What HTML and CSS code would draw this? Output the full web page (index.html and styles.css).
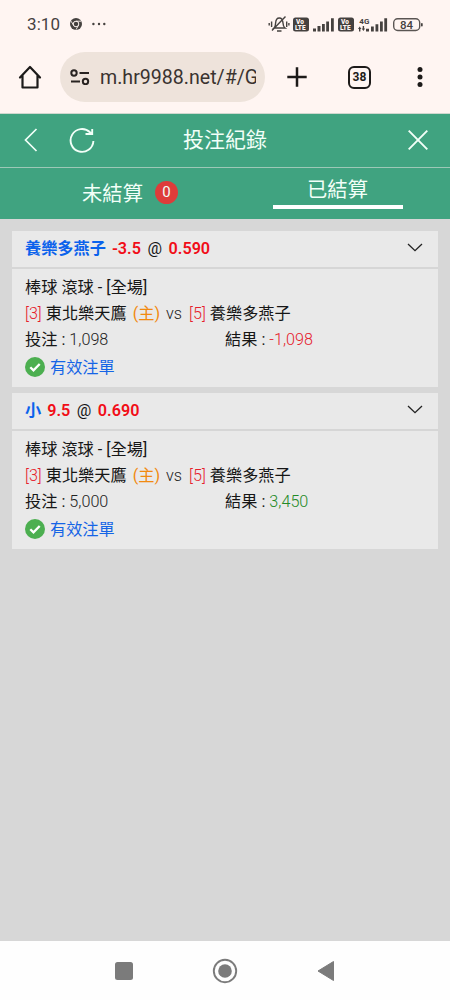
FILE: index.html
```html
<!DOCTYPE html>
<html lang="zh-Hant">
<head>
<meta charset="utf-8">
<meta name="viewport" content="width=device-width, initial-scale=1">
<title>投注紀錄</title>
<link rel="stylesheet" href="styles.css">
</head>
<body>
<div class="screen">
  <div class="status">
    <span class="clock">3:10</span>
    <svg class="chrome" width="12" height="12" viewBox="0 0 12 12"><circle cx="6" cy="6" r="6" fill="#45413f"/><circle cx="6" cy="6" r="2.8" fill="#45413f" stroke="#fff5f2" stroke-width="1"/><path d="M6 3.2h5M3.6 7.4 1.1 3.2M8.4 7.4 6 11.7" stroke="#fff5f2" stroke-width=".9"/></svg>
    <svg class="more" width="14" height="4" viewBox="0 0 14 4" fill="#45413f"><circle cx="1.4" cy="2" r="1.2"/><circle cx="7" cy="2" r="1.2"/><circle cx="12.3" cy="2" r="1.2"/></svg>
    <svg class="signals" width="156" height="20" viewBox="0 0 156 20">
      <g fill="none" stroke="#45413f" stroke-width="1.4">
        <path d="M6 14c1.500-1.200 1.500-3 1.600-5 .2-3 1.700-5 3.700-5s3.500 2 3.700 5c.1 2 .2 3.800 2 5zM9 17h4.500M4 16.500 17.500 2.500M3.600 7.500V13M1.200 9v2.500M18.700 7.500V13M20.900 9v2.500"/>
      </g>
      <g fill="#45413f">
        <rect x="25" y="3.500" width="16" height="14" rx="2.500"/>
        <rect x="70" y="3.500" width="16" height="14" rx="2.500"/>
        <path d="M45 14.500h3v3h-3zM49.500 12h3v5.500h-3zM54 10h2.800v7.500H54zM58.200 7.500H61v10h-2.800zM63 4.300h2.800v13.200H63z"/>
        <path d="M98 14.800h3v2.700h-3zM103 12.500h2.800v5H103zM107.500 10.200h2.800v7.300h-2.800zM112 7.500h2.800v10H112zM116.300 4.300h2.800v13.200h-2.800z"/>
        <path d="m90 15 1.700-2.500L93.400 15h-1v2.500h-1.400V15zM93.700 14.500h1V12h1.400v2.500h1l-1.700 2.500z"/>
      </g>
      <g fill="#fff5f2" class="lte"><text x="28" y="10">Vo</text><text x="27" y="16.300">LTE</text><text x="73" y="10">Vo</text><text x="72" y="16.300">LTE</text></g>
      <text class="net" x="91.300" y="9.500">4G</text>
      <rect x="125.700" y="4.700" width="26" height="11.800" rx="4" fill="none" stroke="#5a5553" stroke-width="1.400"/>
      <rect x="153" y="9" width="1.700" height="3.600" rx=".8" fill="#45413f"/>
      <text class="battery" x="138.500" y="14.500">84</text>
    </svg>
  </div>
  <div class="browser">
    <svg class="home" width="24" height="24" viewBox="0 0 24 24" fill="none" stroke="#1d1a19" stroke-width="2.200" stroke-linejoin="round" stroke-linecap="round"><path d="M2 12.500 12 2l10 10.500M4.500 10.500V22.500h15v-12"/></svg>
    <div class="address">
      <svg width="20" height="16" viewBox="0 0 20 16" fill="none" stroke="#282321" stroke-width="2"><circle cx="4" cy="4" r="2.700"/><path d="M9.500 4H19M1 12.500h9"/><circle cx="15.500" cy="12.500" r="2.700"/></svg>
      <span class="url">m.hr9988.net/#/G</span>
    </div>
    <svg class="plus" width="20" height="20" viewBox="0 0 20 20"><path d="M10 .3v19.400M.3 10h19.400" stroke="#1d1a19" stroke-width="2.500"/></svg>
    <span class="count">38</span>
    <svg class="dots" width="6" height="20" viewBox="0 0 6 20" fill="#1d1a19"><circle cx="3" cy="2.600" r="2.500"/><circle cx="3" cy="10" r="2.500"/><circle cx="3" cy="17.400" r="2.500"/></svg>
  </div>
  <header class="header">
    <svg class="back" width="14" height="24" viewBox="0 0 14 24" fill="none" stroke="#f2fff8" stroke-width="1.700"><path d="M12.500 1 1.500 12l11 11"/></svg>
    <svg class="reload" width="26" height="26" viewBox="0 0 26 26" fill="none" stroke="#f2fff8" stroke-width="1.900"><path d="M24.400 14A11.400 11.400 0 1 1 21 5.300l1.500 1.300M16.500 7h6.700V2"/></svg>
    <h1 class="title">投注紀錄</h1>
    <svg class="close" width="20" height="20" viewBox="0 0 20 20"><path d="m.7.700 18.600 18.600M19.300.700.700 19.300" stroke="#f2fff8" stroke-width="1.900"/></svg>
  </header>
  <nav class="tabs">
    <div class="tab">未結算<span class="badge">0</span></div>
    <div class="tab"><span class="active">已結算</span></div>
  </nav>
  <main class="list">
    <section class="card">
      <div class="head"><span class="pick">養樂多燕子</span><span class="num">-3.5</span><span class="at">@</span><span class="num">0.590</span>
        <svg class="chevron" width="16" height="9" viewBox="0 0 16 9" fill="none" stroke="#222" stroke-width="1.300"><path d="m1 1 7 6.700L15 1"/></svg></div>
      <div class="body">
        <div class="line">棒球 滾球 - [全場]</div>
        <div class="line"><span class="loss">[3]</span><span class="team">東北樂天鷹</span><span class="host">(主)</span><span class="vs">vs</span><span class="loss">[5]</span><span class="team">養樂多燕子</span></div>
        <div class="line split"><span>投注 : <span class="val">1,098</span></span><span>結果 : <span class="loss">-1,098</span></span></div>
        <div class="valid"><svg width="20" height="20" viewBox="0 0 20 20"><circle cx="10" cy="10" r="10" fill="#4caf50"/><path d="m5.300 10.200 3.200 3.200L14.700 7" fill="none" stroke="#fff" stroke-width="2.300"/></svg><span class="note">有效注單</span></div>
      </div>
    </section>
    <section class="card">
      <div class="head"><span class="pick">小</span><span class="num">9.5</span><span class="at">@</span><span class="num">0.690</span>
        <svg class="chevron" width="16" height="9" viewBox="0 0 16 9" fill="none" stroke="#222" stroke-width="1.300"><path d="m1 1 7 6.700L15 1"/></svg></div>
      <div class="body">
        <div class="line">棒球 滾球 - [全場]</div>
        <div class="line"><span class="loss">[3]</span><span class="team">東北樂天鷹</span><span class="host">(主)</span><span class="vs">vs</span><span class="loss">[5]</span><span class="team">養樂多燕子</span></div>
        <div class="line split"><span>投注 : <span class="val">5,000</span></span><span>結果 : <span class="win">3,450</span></span></div>
        <div class="valid"><svg width="20" height="20" viewBox="0 0 20 20"><circle cx="10" cy="10" r="10" fill="#4caf50"/><path d="m5.300 10.200 3.200 3.200L14.700 7" fill="none" stroke="#fff" stroke-width="2.300"/></svg><span class="note">有效注單</span></div>
      </div>
    </section>
  </main>
  <footer class="system">
    <svg width="18" height="18" viewBox="0 0 18 18"><rect width="18" height="18" rx="2.500" fill="#7b7b7b"/></svg>
    <svg width="26" height="26" viewBox="0 0 26 26"><circle cx="13" cy="13" r="11.200" fill="none" stroke="#7b7b7b" stroke-width="1.900"/><circle cx="13" cy="13" r="6.800" fill="#7b7b7b"/></svg>
    <svg width="18" height="22" viewBox="0 0 18 22"><path d="M16.500 1.500v19L1 11z" fill="#7b7b7b" stroke="#7b7b7b" stroke-linejoin="round"/></svg>
  </footer>
</div>
</body>
</html>
```
FILE: styles.css
```css
* { box-sizing: border-box; }
body { margin: 0; font-family: Roboto, "Noto Sans CJK TC", sans-serif; color: #161616; }
svg { flex: none; display: block; }
.screen { width: 450px; height: 1000px; display: flex; flex-direction: column; background: #d7d7d7; overflow: hidden; }

.status { height: 48px; flex: none; display: flex; align-items: center; padding-left: 27px; background: #fff5f2; color: #45413f; }
.clock { width: 43px; font-size: 17px; line-height: 20px; letter-spacing: .1px; }
.more { margin-left: 10px; }
.signals { margin-left: 162px; }
.lte { font: 900 6.500px Roboto, sans-serif; }
.net { font: 700 8px Roboto, sans-serif; fill: #45413f; }
.battery { font: 500 11.500px Roboto, sans-serif; fill: #45413f; text-anchor: middle; }

.browser { height: 66px; flex: none; display: flex; align-items: center; padding: 0 0 7px 18px; background: #fff5f2; border-bottom: 1px solid #cfd8cf; }
.address { width: 205px; height: 50px; margin-left: 18px; padding: 0 9px 0 10px; border-radius: 25px; background: #eee3db; display: flex; align-items: center; gap: 10px; }
.url { flex: 1; overflow: hidden; white-space: nowrap; font-size: 19.600px; line-height: 28px; color: #3a3330; padding-top: 1px; }
.plus { margin-left: 22px; }
.count { width: 23px; height: 23px; margin-left: 41px; border: 2.200px solid #1d1a19; border-radius: 6px; font-size: 12px; font-weight: 700; line-height: 19px; text-align: center; color: #1d1a19; }
.dots { margin-left: 46px; }

.header { height: 54px; flex: none; display: flex; align-items: center; padding-left: 24px; padding-bottom: 1px; background: #40a380; border-bottom: 1px solid #9dc8b7; color: #f2fff8; }
.reload { margin-left: 31px; }
.title { margin: 0 0 0 88px; width: 84px; font-size: 21px; line-height: 30px; font-weight: 400; white-space: nowrap; }
.close { margin-left: 141px; }

.tabs { height: 51px; flex: none; display: grid; grid-template-columns: 1fr 1fr; background: #40a380; color: #f2fff8; font-size: 20.300px; line-height: 30px; }
.tab { display: flex; justify-content: center; align-items: flex-start; padding-top: 11px; padding-left: 35px; }
.tab + .tab { padding: 7px 0 0; }
.badge { width: 23px; height: 23px; margin: 2px 0 0 12px; border-radius: 50%; background: #de3c3a; font-size: 15px; line-height: 23px; text-align: center; }
.active { width: 130px; height: 34px; border-bottom: 4px solid #fff; text-align: center; }

.list { flex: 1; padding: 12px 12px 0; }
.card { height: 156px; margin-bottom: 6px; background: #e9e9e9; font-size: 16.200px; }
.head { height: 38px; padding: 0 15px 0 13px; display: flex; align-items: center; border-bottom: 2px solid #d6d6d6; font-weight: 400; line-height: 24px; }
.pick { color: #0b62ec; font-weight: 700; margin-right: 6px; }
.num { color: #f10d17; font-weight: 600; }
.at { margin: 0 6.500px; }
.chevron { margin-left: auto; margin-bottom: 3px; }
.body { padding: 6px 13px 0; }
.line { height: 26px; line-height: 26px; white-space: nowrap; }
.loss { color: #e6202c; font-weight: 300; }
.val { color: #222; font-weight: 300; }
.win { color: #238a26; font-weight: 300; }
.team { margin-left: 4px; }
.host { color: #f18a10; margin: 0 6px; }
.vs { margin-right: 7px; color: #222; font-weight: 300; }
.split { display: grid; grid-template-columns: 200px 1fr; }
.valid { height: 27px; display: flex; align-items: center; gap: 5px; color: #1565e6; }
.note { padding-bottom: 1px; }

.system { height: 59px; flex: none; background: #fefefe; display: flex; justify-content: center; align-items: center; gap: 79px; }
```
